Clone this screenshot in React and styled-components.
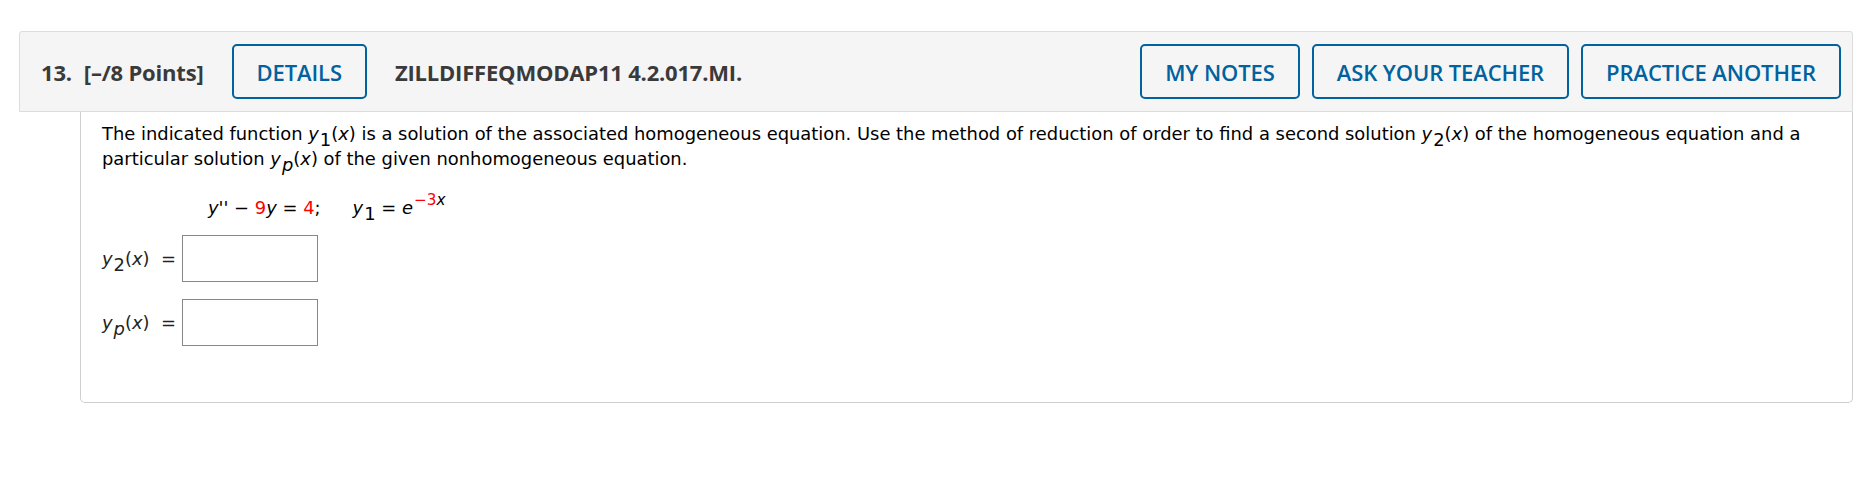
import React from 'react';
import styled, { createGlobalStyle } from 'styled-components';

const GlobalStyle = createGlobalStyle`
  html, body {
    margin: 0;
    padding: 0;
    background: #fff;
  }
`;

const Page = styled.div`
  padding: 31px 13px 40px 19px;
`;

const Header = styled.div`
  display: flex;
  align-items: center;
  height: 79px;
  padding: 0 11px 0 21px;
  background: #f5f5f5;
  border: 1px solid #dcdcdc;
  border-radius: 3px 3px 0 0;
  font-family: "Open Sans", "Noto Sans", sans-serif;
  font-size: 22px;
  color: #3a3a3a;
`;

const Label = styled.span`
  font-weight: 700;
  white-space: nowrap;
  letter-spacing: -0.2px;
  margin-right: ${(p) => p.$gap || 0}px;
`;

const OutlineButton = styled.button`
  height: 55px;
  padding: 0 ${(p) => p.$pad || 23}px;
  margin: 0 ${(p) => p.$margin || 0}px;
  background: transparent;
  border: 2px solid #00629e;
  border-radius: 5px;
  color: #00629e;
  font-family: "Open Sans", "Noto Sans", sans-serif;
  font-size: 22px;
  font-weight: 600;
  letter-spacing: -0.1px;
  white-space: nowrap;
  cursor: pointer;
`;

const Actions = styled.div`
  display: flex;
  gap: 12px;
  margin-left: auto;
`;

const Body = styled.div`
  margin-left: 61px;
  padding: 9px 20px 56px 21px;
  border: 1px solid #cfcfcf;
  border-top: none;
  border-radius: 0 0 5px 5px;
  font-family: "DejaVu Sans", Verdana, sans-serif;
  font-size: 17.9px;
  color: #000;
`;

const Prompt = styled.p`
  margin: 0;
  line-height: 25px;
  max-width: 1715px;
`;

const Var = styled.i`
  font-style: italic;
`;

const Sub = styled.sub`
  font-style: normal;
  font-size: 100%;
  vertical-align: -6px;
  line-height: 0;
  margin-left: 1px;
`;

const Sup = styled.sup`
  font-size: 85%;
  vertical-align: 9px;
  line-height: 0;
  margin-left: 1px;
`;

const Red = styled.span`
  color: #ff0000;
`;

const Equation = styled.div`
  margin: 24px 0 0 106px;
  line-height: 25px;
`;

const Gap = styled.span`
  display: inline-block;
  width: ${(p) => p.$w}px;
`;

const AnswerRow = styled.div`
  display: flex;
  align-items: center;
  margin-top: ${(p) => p.$top}px;
`;

const AnswerLabel = styled.span`
  width: 80px;
  color: #222;
  white-space: pre;
`;

const AnswerInput = styled.input`
  box-sizing: border-box;
  width: 136px;
  height: 47px;
  border: 1px solid #888;
  background: #fff;
  font-family: inherit;
  font-size: 15px;
`;

function Fn({ sub, italicSub }) {
  return (
    <>
      <Var>y</Var>
      <Sub>{italicSub ? <Var>{sub}</Var> : sub}</Sub>(<Var>x</Var>)
    </>
  );
}

export default function App() {
  return (
    <>
      <GlobalStyle />
      <Page>
        <Header>
          <Label $gap={12}>13.</Label>
          <Label>[–/8 Points]</Label>
          <OutlineButton $margin={28} $pad={23}>DETAILS</OutlineButton>
          <Label>ZILLDIFFEQMODAP11 4.2.017.MI.</Label>
          <Actions>
            <OutlineButton>MY NOTES</OutlineButton>
            <OutlineButton>ASK YOUR TEACHER</OutlineButton>
            <OutlineButton>PRACTICE ANOTHER</OutlineButton>
          </Actions>
        </Header>
        <Body>
          <Prompt>
            The indicated function <Fn sub="1" /> is a solution of the associated homogeneous
            equation. Use the method of reduction of order to find a second solution <Fn sub="2" /> of
            the homogeneous equation and a particular solution <Fn sub="p" italicSub /> of the given
            nonhomogeneous equation.
          </Prompt>
          <Equation>
            <Var>{"y''"}</Var> − <Red>9</Red><Var>y</Var> = <Red>4</Red>;<Gap $w={32} />
            <Var>y</Var><Sub>1</Sub> = <Var>e</Var>
            <Sup><Red>−3</Red><Var>x</Var></Sup>
          </Equation>
          <AnswerRow $top={15}>
            <AnswerLabel><Fn sub="2" />  =</AnswerLabel>
            <AnswerInput type="text" />
          </AnswerRow>
          <AnswerRow $top={17}>
            <AnswerLabel><Fn sub="p" italicSub />  =</AnswerLabel>
            <AnswerInput type="text" />
          </AnswerRow>
        </Body>
      </Page>
    </>
  );
}
